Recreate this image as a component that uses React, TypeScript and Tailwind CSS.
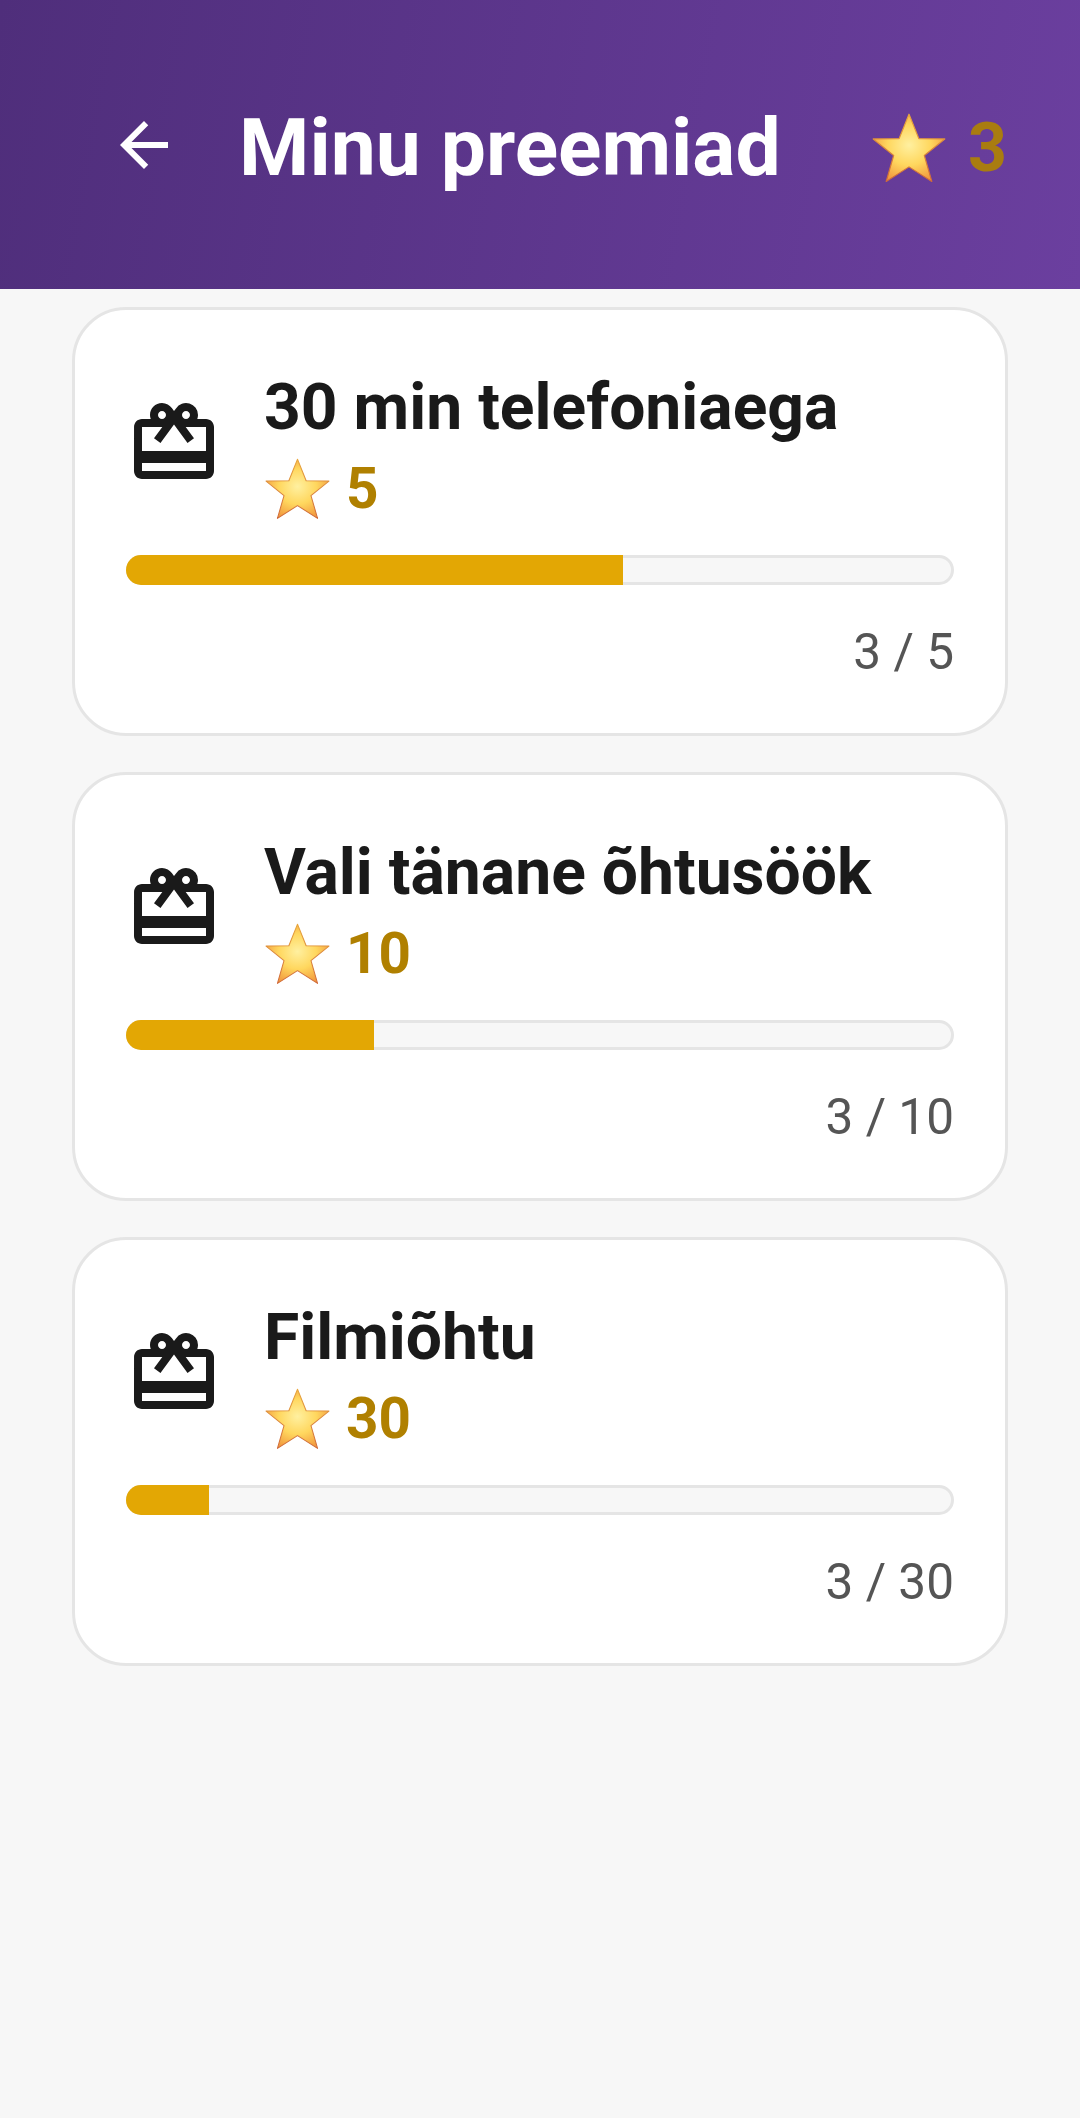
import { MdArrowBack, MdCardGiftcard } from "react-icons/md";

const Star = ({ className }: { className: string }) => (
  <svg viewBox="0 0 188 178" className={className}>
    <defs>
      <radialGradient id="starFill" cx="50%" cy="46%" r="60%">
        <stop offset="0%" stopColor="#fff0a0" />
        <stop offset="50%" stopColor="#ffd75e" />
        <stop offset="100%" stopColor="#f0923a" />
      </radialGradient>
      <linearGradient id="starEdge" x1="0" y1="0" x2="0" y2="1">
        <stop offset="0%" stopColor="#e8a63c" />
        <stop offset="100%" stopColor="#cf6a3a" />
      </linearGradient>
    </defs>
    <polygon
      points="94,3 119,65 185,66 133,108 152,174 94,137 36,174 55,108 3,66 69,65"
      fill="url(#starFill)"
      stroke="url(#starEdge)"
      strokeWidth="3"
      strokeLinejoin="round"
    />
  </svg>
);

const rewards = [
  { title: "30 min telefoniaega", cost: 5, percent: 60 },
  { title: "Vali tänane õhtusöök", cost: 10, percent: 30 },
  { title: "Filmiõhtu", cost: 30, percent: 10 },
];

export default function App() {
  return (
    <div className="min-h-[2118px] bg-[#f7f7f7] font-['Roboto',sans-serif]">
      <header className="flex h-[289px] items-center bg-[linear-gradient(100deg,#4f2e7b,#6b3f9f)] pl-[108px] pr-[73px]">
        <MdArrowBack className="h-[72px] w-[72px] shrink-0 text-white" />
        <h1 className="mt-[6px] ml-[59px] flex-1 text-[80.4px] leading-[94px] font-bold text-white">
          Minu preemiad
        </h1>
        <Star className="mt-[6px] h-[70px] w-[74px]" />
        <span className="mt-[6px] ml-[22px] text-[68px] leading-[80px] font-bold text-[#a97c10]">
          3
        </span>
      </header>

      <main className="flex flex-col gap-[36px] px-[72px] pt-[18px]">
        {rewards.map((reward) => (
          <div
            key={reward.title}
            className="h-[429px] rounded-[54px] border-[3px] border-[#e5e5e5] bg-white px-[51px] pt-[59px]"
          >
            <div className="flex items-center">
              <MdCardGiftcard className="-mt-[5px] h-[96px] w-[96px] shrink-0 text-[#1a1a1a]" />
              <div className="ml-[42px]">
                <div className="text-[64.2px] leading-[76px] font-bold text-[#1a1a1a]">
                  {reward.title}
                </div>
                <div className="mt-[11px] flex items-center">
                  <Star className="ml-[1px] h-[62px] w-[65px]" />
                  <span className="ml-[16px] text-[56.6px] leading-[66px] font-bold text-[#b08000]">
                    {reward.cost}
                  </span>
                </div>
              </div>
            </div>
            <div className="mt-[33px] h-[30px] rounded-full border-[3px] border-[#e5e5e5] bg-[#f7f7f7]">
              <div
                className="-m-[3px] h-[30px] rounded-l-full bg-[#e3a704]"
                style={{ width: `calc((100% + 6px) * ${reward.percent / 100})` }}
              />
            </div>
            <div className="mt-[38px] text-right text-[49.5px] leading-[58px] text-[#555555]">
              3 / {reward.cost}
            </div>
          </div>
        ))}
      </main>
    </div>
  );
}
